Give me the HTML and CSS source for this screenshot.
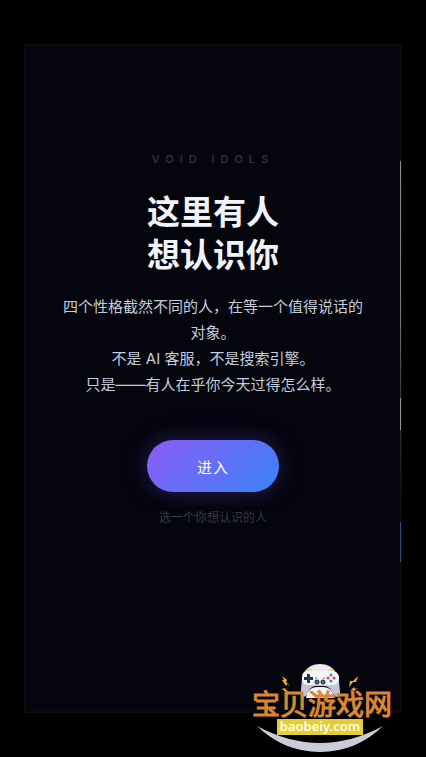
FILE: index.html
```html
<!DOCTYPE html>
<html lang="zh-CN">
<head>
<meta charset="utf-8">
<meta name="viewport" content="width=device-width, initial-scale=1">
<title>VOID IDOLS</title>
<link rel="stylesheet" href="styles.css">
</head>
<body>
<main class="card">
  <p class="brand">VOID IDOLS</p>
  <h1 class="title">这里有人<br>想认识你</h1>
  <p class="intro">四个性格截然不同的人，在等一个值得说话的对象。<br>不是 AI 客服，不是搜索引擎。<br>只是——有人在乎你今天过得怎么样。</p>
  <button class="enter" type="button">进入</button>
  <p class="hint">选一个你想认识的人</p>
  <div class="next-edge"></div>
</main>
<svg class="watermark" width="144" height="97" viewBox="0 0 144 97" role="img" aria-label="宝贝游戏网 baobeiy.com">
  <path d="M5 68Q68 120 131 68Q108 94 68 94Q28 94 5 68Z" fill="none"/>
  <path d="M5 68Q68 102 131 68Q104 94 68 94Q32 94 5 68Z" fill="#cbccda"/>
  <path d="M53 14Q57 6 68 6Q79 6 83 14Z" fill="#ececec"/>
  <path d="M54 13H82Q87 15 87 23L88 34Q88 39 85 39Q82 38 80 34Q78 29 73 28H63Q58 29 56 34Q54 39 51 39Q48 38 49 32L50 20Q51 14 54 13Z" fill="#c4c5d8"/>
  <path d="M54 13H82Q87 15 87 20Q87 26 81 27H55Q50 26 50 20Q50 14 54 13Z" fill="#f5f5f8"/>
  <path d="M54 40Q55 30 64 29H72Q81 30 82 40Z" fill="#f1f1f3"/>
  <path d="M53 13L55 12H60M76 12H81L83 13" fill="none" stroke="#e5bd58"/>
  <path d="M55 16h3v3h3v3h-3v3h-3v-3h-3v-3h3Z" fill="#173c50"/>
  <circle cx="65" cy="24" r="2.5" fill="#24495b"/><circle cx="71" cy="24" r="2.5" fill="#24495b"/>
  <circle cx="65" cy="24" r="1" fill="#67818d"/><circle cx="71" cy="24" r="1" fill="#67818d"/>
  <path d="M63 20h2M71 20h2" stroke="#d94764"/>
  <circle cx="79" cy="17" r="1.5" fill="#2e91a4"/><circle cx="79" cy="23" r="1.5" fill="#248eb0"/>
  <circle cx="76" cy="20" r="1.5" fill="#dd4058"/><circle cx="82" cy="20" r="1.5" fill="#dd4058"/>
  <path d="M30 18L35 22L34 24L39 29L35 26L34 28L30 22L32 22ZM29 31L34 30L33 31L37 34L32 33V32ZM106 18L104 24L101 24L97 29L98 23L101 23ZM98 33L102 29L103 31L106 30L102 33L101 32Z" fill="#efb52d"/>
  <text class="mark-name" x="0" y="57">宝贝游戏网</text>
  <rect x="25" y="61" width="86" height="16" fill="#e5cd34"/>
  <text class="mark-url" x="68" y="73" text-anchor="middle">baobeiy.com</text>
</svg>
</body>
</html>
```
FILE: styles.css
```css
* { box-sizing: border-box; }

body {
  margin: 0;
  min-height: 100vh;
  padding: 44px 24px;
  display: flex;
  position: relative;
  overflow-x: hidden;
  background: #000;
  color: #f1f3fa;
  font-family: Inter, "Noto Sans CJK SC", sans-serif;
}

.card {
  flex: 1;
  min-width: 0;
  position: relative;
  display: flex;
  flex-direction: column;
  align-items: center;
  padding: 105px 36px 40px;
  border: 2px solid #0c0c0f;
  background: #04050d;
  text-align: center;
}

.brand {
  margin: 0 0 24px;
  color: #343743;
  font-size: 11px;
  font-weight: 500;
  line-height: 16px;
  letter-spacing: 6px;
}

.title {
  margin: 0 0 17px;
  font-size: 33px;
  font-weight: 700;
  line-height: 43px;
}

.intro {
  margin: 0 0 42px;
  color: #c5ccda;
  font-size: 15px;
  line-height: 26px;
}

.enter {
  width: 132px;
  height: 52px;
  border: 0;
  border-radius: 26px;
  background: linear-gradient(135deg, #8b5cf6, #3b82f6);
  box-shadow: 0 0 24px rgb(124 92 246 / 30%);
  color: #fff;
  font: inherit;
  font-size: 15px;
  letter-spacing: 1px;
}

.hint {
  margin: 17px 0 0;
  color: #343a46;
  font-size: 12px;
  line-height: 18px;
}

.next-edge {
  position: absolute;
  top: 115px;
  right: -1px;
  width: 1px;
  height: 401px;
  background: linear-gradient(#8f8d8f 0, #777074 40%, #3b3034 59%, #929294 59%, #929294 67%, #303034 67%, #111116 82%, #0c0c0f 90%, #354a7a 90%, #354a7a 100%);
}

.watermark {
  position: absolute;
  right: 30px;
  bottom: 2px;
}

.mark-name {
  fill: #e08725;
  stroke: #c9874a;
  stroke-width: 1px;
  paint-order: stroke;
  font-family: "Noto Sans CJK SC", sans-serif;
  font-size: 28px;
  font-weight: 400;
}

.mark-url {
  fill: #fffef0;
  font-family: "Noto Sans", sans-serif;
  font-size: 13px;
  font-weight: 600;
}
```
